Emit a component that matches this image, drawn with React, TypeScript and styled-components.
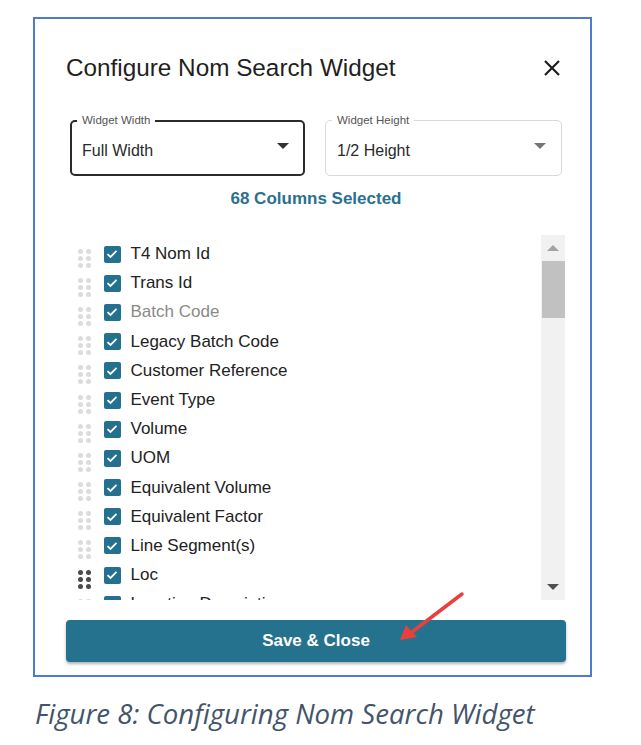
import React from "react";
import styled, { createGlobalStyle } from "styled-components";

const GlobalStyle = createGlobalStyle`
  html, body { margin: 0; padding: 0; background: #ffffff; }
  body { font-family: "Liberation Sans", Arial, sans-serif; color: #212121; }
  * { box-sizing: border-box; }
`;

const Page = styled.div`
  width: 641px;
  height: 745px;
  padding: 17px 0 0 33px;
  position: relative;
`;

const Frame = styled.div`
  position: relative;
  width: 559px;
  height: 660px;
  border: 2px solid #4d7bd1;
  padding: 36px 24px 0 31px;
  display: flex;
  flex-direction: column;
`;

const Header = styled.div`
  display: flex;
  align-items: center;
  justify-content: space-between;
  height: 26px;
`;

const Title = styled.h2`
  margin: 0;
  font-size: 24.3px;
  font-weight: 400;
  line-height: 26px;
  color: #1f1f1f;
`;

const CloseBtn = styled.button`
  border: 0;
  background: none;
  padding: 0;
  width: 20px;
  height: 20px;
  margin-right: 4px;
  display: flex;
  align-items: center;
  justify-content: center;
  color: #1f1f1f;
`;

const SelectRow = styled.div`
  margin: 39px 4px 0 4px;
  display: grid;
  grid-template-columns: 235px 237px;
  column-gap: 20px;
`;

const Field = styled.div<{ $focused?: boolean }>`
  position: relative;
  height: 56px;
  border: ${(p) => (p.$focused ? "2px solid #2b2b2b" : "1px solid #d9d9d9")};
  border-radius: 5px;
  display: flex;
  align-items: center;
  justify-content: space-between;
  padding: ${(p) => (p.$focused ? "6px 14px 0 10px" : "6px 15px 0 11px")};
`;

const FieldLabel = styled.span<{ $focused?: boolean }>`
  position: absolute;
  top: ${(p) => (p.$focused ? "-8px" : "-7px")};
  left: ${(p) => (p.$focused ? "5px" : "6px")};
  padding: 0 5px;
  background: #ffffff;
  font-size: 11.5px;
  line-height: 13px;
  color: #555555;
`;

const FieldValue = styled.span`
  font-size: 16px;
  color: #2a2a2a;
`;

const Caret = styled.span<{ $dark?: boolean }>`
  width: 0;
  height: 0;
  border-left: 6px solid transparent;
  border-right: 6px solid transparent;
  border-top: 6px solid ${(p) => (p.$dark ? "#333333" : "#777777")};
  margin-top: -10px;
`;

const Counter = styled.div`
  margin-top: 13px;
  height: 20px;
  line-height: 20px;
  text-align: center;
  font-size: 17px;
  font-weight: 700;
  color: #2a7091;
`;

const ListArea = styled.div`
  margin-top: 26px;
  height: 365px;
  display: flex;
  overflow: hidden;
`;

const List = styled.ul`
  flex: 1;
  margin: 0;
  padding: 4.5px 0 0 12px;
  list-style: none;
  overflow: hidden;
`;

const Row = styled.li`
  height: 29.2px;
  display: flex;
  align-items: center;
`;

const Handle = styled.span<{ $active?: boolean }>`
  display: grid;
  grid-template-columns: 5px 5px;
  grid-auto-rows: 5px;
  column-gap: 2.5px;
  row-gap: 2px;
  margin-top: 8px;
  margin-right: 13px;
  & > i {
    display: block;
    border-radius: 50%;
    background: ${(p) => (p.$active ? "#4a4a4a" : "#dcdcdc")};
  }
`;

const Check = styled.span`
  width: 17px;
  height: 17px;
  border-radius: 2px;
  background: #23708f;
  display: flex;
  align-items: center;
  justify-content: center;
  margin-right: 10px;
`;

const Label = styled.span<{ $muted?: boolean }>`
  font-size: 17px;
  color: ${(p) => (p.$muted ? "#8a8a8a" : "#222222")};
  white-space: nowrap;
`;

const Scrollbar = styled.div`
  width: 24px;
  margin-right: 1px;
  height: 100%;
  background: #f1f1f1;
  display: flex;
  flex-direction: column;
  align-items: center;
`;

const ScrollArrow = styled.div<{ $down?: boolean }>`
  height: 26px;
  width: 100%;
  display: flex;
  align-items: center;
  justify-content: center;
  & > span {
    width: 0;
    height: 0;
    border-left: 6px solid transparent;
    border-right: 6px solid transparent;
    ${(p) =>
      p.$down
        ? "border-top: 6px solid #505050;"
        : "border-bottom: 6px solid #a3a3a3;"}
  }
`;

const Thumb = styled.div`
  width: 23px;
  height: 57px;
  background: #c1c1c1;
`;

const Spacer = styled.div`
  flex: 1;
`;

const SaveButton = styled.button`
  margin-top: 20px;
  height: 42px;
  width: 500px;
  border: 0;
  border-radius: 4px;
  background: #25728f;
  color: #ffffff;
  font-family: "Liberation Sans", Arial, sans-serif;
  font-size: 17px;
  font-weight: 700;
  box-shadow: 0 2px 3px rgba(0, 0, 0, 0.3);
`;

const Arrow = styled.svg`
  position: absolute;
  left: 325px;
  top: 568px;
  overflow: visible;
`;

const Caption = styled.p`
  margin: 17px 0 0 2px;
  font-family: "Open Sans", Lato, sans-serif;
  font-style: italic;
  font-size: 27.6px;
  line-height: 38px;
  color: #44546a;
`;

const items: { name: string; muted?: boolean; active?: boolean }[] = [
  { name: "T4 Nom Id" },
  { name: "Trans Id" },
  { name: "Batch Code", muted: true },
  { name: "Legacy Batch Code" },
  { name: "Customer Reference" },
  { name: "Event Type" },
  { name: "Volume" },
  { name: "UOM" },
  { name: "Equivalent Volume" },
  { name: "Equivalent Factor" },
  { name: "Line Segment(s)" },
  { name: "Loc", active: true },
  { name: "Location Description" },
];

const CheckIcon = () => (
  <svg width="12" height="10" viewBox="0 0 12 10">
    <path d="M1.5 5.2 L4.5 8 L10.5 1.8" fill="none" stroke="#ffffff" strokeWidth="1.8" />
  </svg>
);

export default function App() {
  return (
    <Page>
      <GlobalStyle />
      <Frame>
        <Header>
          <Title>Configure Nom Search Widget</Title>
          <CloseBtn aria-label="close">
            <svg width="18" height="18" viewBox="0 0 18 18">
              <path d="M2 2 L16 16 M16 2 L2 16" stroke="#1f1f1f" strokeWidth="2.2" />
            </svg>
          </CloseBtn>
        </Header>
        <SelectRow>
          <Field $focused>
            <FieldLabel $focused>Widget Width</FieldLabel>
            <FieldValue>Full Width</FieldValue>
            <Caret $dark />
          </Field>
          <Field>
            <FieldLabel>Widget Height</FieldLabel>
            <FieldValue>1/2 Height</FieldValue>
            <Caret />
          </Field>
        </SelectRow>
        <Counter>68 Columns Selected</Counter>
        <ListArea>
          <List>
            {items.map((it) => (
              <Row key={it.name}>
                <Handle $active={it.active}>
                  <i /><i /><i /><i /><i /><i />
                </Handle>
                <Check>
                  <CheckIcon />
                </Check>
                <Label $muted={it.muted}>{it.name}</Label>
              </Row>
            ))}
          </List>
          <Scrollbar>
            <ScrollArrow>
              <span />
            </ScrollArrow>
            <Thumb />
            <Spacer />
            <ScrollArrow $down>
              <span />
            </ScrollArrow>
          </Scrollbar>
        </ListArea>
        <SaveButton>Save &amp; Close</SaveButton>
        <Arrow width="110" height="70">
          <line x1="102" y1="7" x2="52" y2="45" stroke="#e8403c" strokeWidth="3.5" strokeLinecap="round" />
          <polygon points="40,53 46,38 57,50" fill="#e8403c" />
        </Arrow>
      </Frame>
      <Caption>Figure 8: Configuring Nom Search Widget</Caption>
    </Page>
  );
}
